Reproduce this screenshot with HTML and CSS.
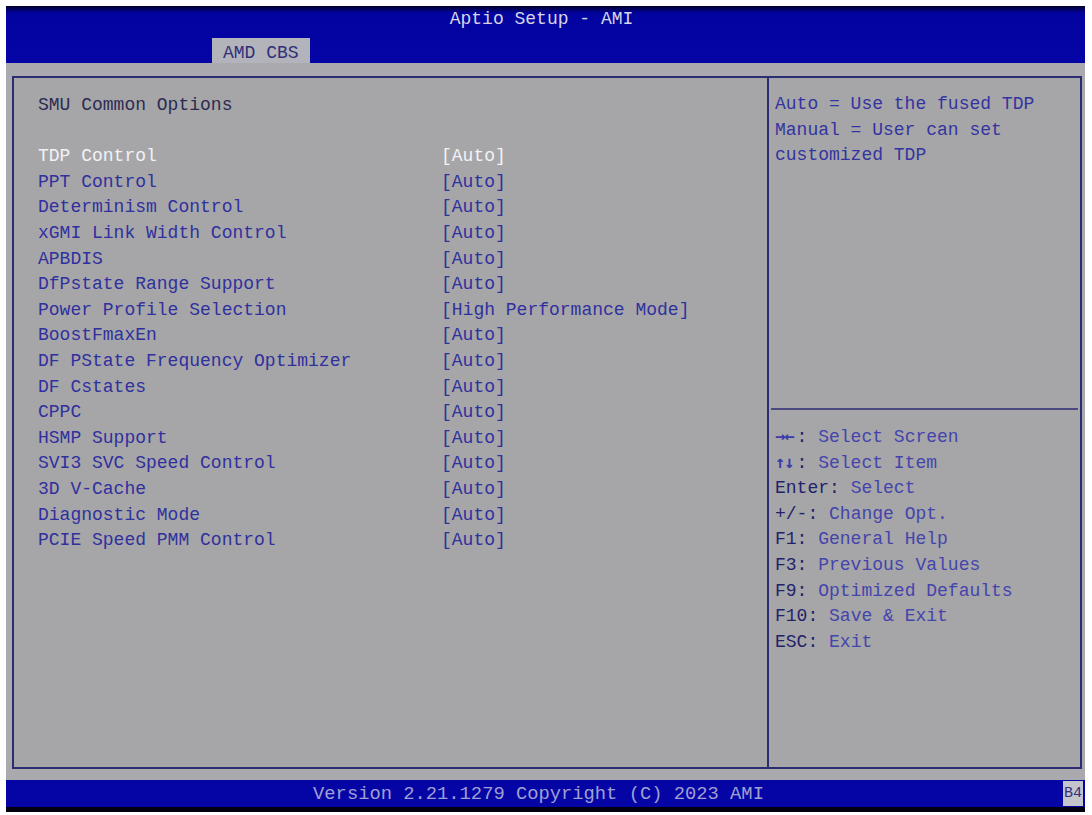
FILE: index.html
```html
<!DOCTYPE html>
<html>
<head>
<meta charset="utf-8">
<title>Aptio Setup - AMI</title>
<link rel="stylesheet" href="styles.css">
</head>
<body>
<div class="screen">
  <header class="top">
    <div class="title">Aptio Setup - AMI</div>
    <div class="tabs"><span class="tab">AMD CBS</span></div>
  </header>
  <div class="body">
    <div class="frame">
      <section class="main">
        <div class="heading">SMU Common Options</div>
        <div class="blank"></div>
        <div class="row sel"><span class="lbl">TDP Control</span><span class="val">[Auto]</span></div>
        <div class="row"><span class="lbl">PPT Control</span><span class="val">[Auto]</span></div>
        <div class="row"><span class="lbl">Determinism Control</span><span class="val">[Auto]</span></div>
        <div class="row"><span class="lbl">xGMI Link Width Control</span><span class="val">[Auto]</span></div>
        <div class="row"><span class="lbl">APBDIS</span><span class="val">[Auto]</span></div>
        <div class="row"><span class="lbl">DfPstate Range Support</span><span class="val">[Auto]</span></div>
        <div class="row"><span class="lbl">Power Profile Selection</span><span class="val">[High Performance Mode]</span></div>
        <div class="row"><span class="lbl">BoostFmaxEn</span><span class="val">[Auto]</span></div>
        <div class="row"><span class="lbl">DF PState Frequency Optimizer</span><span class="val">[Auto]</span></div>
        <div class="row"><span class="lbl">DF Cstates</span><span class="val">[Auto]</span></div>
        <div class="row"><span class="lbl">CPPC</span><span class="val">[Auto]</span></div>
        <div class="row"><span class="lbl">HSMP Support</span><span class="val">[Auto]</span></div>
        <div class="row"><span class="lbl">SVI3 SVC Speed Control</span><span class="val">[Auto]</span></div>
        <div class="row"><span class="lbl">3D V-Cache</span><span class="val">[Auto]</span></div>
        <div class="row"><span class="lbl">Diagnostic Mode</span><span class="val">[Auto]</span></div>
        <div class="row"><span class="lbl">PCIE Speed PMM Control</span><span class="val">[Auto]</span></div>
      </section>
      <aside class="side">
        <div class="help">
          <div class="line">Auto = Use the fused TDP</div>
          <div class="line">Manual = User can set</div>
          <div class="line">customized TDP</div>
        </div>
        <div class="keys">
          <div class="line"><span class="k arr">→←</span><span class="k">:</span> <span class="d">Select Screen</span></div>
          <div class="line"><span class="k arr">↑↓</span><span class="k">:</span> <span class="d">Select Item</span></div>
          <div class="line"><span class="k">Enter:</span> <span class="d">Select</span></div>
          <div class="line"><span class="k">+/-:</span> <span class="d">Change Opt.</span></div>
          <div class="line"><span class="k">F1:</span> <span class="d">General Help</span></div>
          <div class="line"><span class="k">F3:</span> <span class="d">Previous Values</span></div>
          <div class="line"><span class="k">F9:</span> <span class="d">Optimized Defaults</span></div>
          <div class="line"><span class="k">F10:</span> <span class="d">Save &amp; Exit</span></div>
          <div class="line"><span class="k">ESC:</span> <span class="d">Exit</span></div>
        </div>
      </aside>
    </div>
  </div>
  <footer class="bottom">
    <span class="ver">Version 2.21.1279 Copyright (C) 2023 AMI</span>
    <span class="code">B4</span>
  </footer>
</div>
</body>
</html>
```
FILE: styles.css
```css
html, body {
  margin: 0;
  padding: 0;
  background: #ffffff;
}
body {
  width: 1092px;
  height: 815px;
  overflow: hidden;
  font-family: "Liberation Mono", "DejaVu Sans Mono", monospace;
  font-size: 18px;
}
.screen {
  margin: 6px 0 0 6px;
  width: 1079px;
  height: 806px;
  display: flex;
  flex-direction: column;
  background: #a9a9ae;
}
.top {
  height: 57px;
  background: linear-gradient(#00002a 0px, #0303a0 7px, #0505a6 100%);
  display: flex;
  flex-direction: column;
}
.title {
  height: 27px;
  line-height: 27px;
  text-align: center;
  color: #d6d6e6;
  padding-right: 8px;
}
.tabs {
  flex: 1;
  display: flex;
  align-items: flex-end;
  padding-left: 206px;
}
.tab {
  height: 25px;
  line-height: 30px;
  padding: 0 11px;
  background: #b3b3bb;
  color: #303078;
}
.body {
  height: 717px;
  padding: 13px 3px 0 6px;
  box-sizing: border-box;
}
.frame {
  height: 693px;
  box-sizing: border-box;
  border: 2px solid #2c2c70;
  display: flex;
  background: #a6a6a8;
}
.main {
  width: 755px;
  box-sizing: border-box;
  border-right: 2px solid #2c2c70;
  padding: 15px 0 0 24px;
  line-height: 25.6px;
}
.heading {
  color: #2c2c50;
}
.blank {
  height: 25.6px;
}
.row {
  display: flex;
  color: #30309e;
}
.lbl {
  width: 403px;
  flex: none;
}
.row.sel {
  color: #f2f2f6;
}
.side {
  flex: 1;
  display: flex;
  flex-direction: column;
  line-height: 25.6px;
}
.help {
  height: 332px;
  box-sizing: border-box;
  padding: 14px 0 0 4px;
  color: #3434a0;
  border-bottom: 2px solid #4a4a80;
  margin: 0 2px;
}
.keys {
  padding: 15px 0 0 6px;
}
.keys .line {
  height: 25.6px;
  overflow: hidden;
  white-space: nowrap;
}
.k {
  color: #22226a;
}
.k.arr {
  display: inline-block;
  width: 21.6px;
  line-height: 1;
  color: #3a3aa8;
  font-family: "DejaVu Sans Mono", monospace;
  font-size: 17px;
  font-weight: bold;
  letter-spacing: -1px;
  vertical-align: baseline;
}
.d {
  color: #4444ac;
}
.bottom {
  height: 32px;
  box-sizing: border-box;
  background: #0505a6;
  border-bottom: 5px solid #000010;
  display: flex;
  align-items: center;
  justify-content: center;
  position: relative;
  padding-right: 14px;
}
.ver {
  color: #a0a0d2;
  font-size: 18.8px;
}
.code {
  position: absolute;
  right: 2px;
  top: 1px;
  height: 25px;
  line-height: 25px;
  width: 20px;
  text-align: center;
  background: #c4c4cc;
  color: #30307a;
  font-size: 15px;
}
```
